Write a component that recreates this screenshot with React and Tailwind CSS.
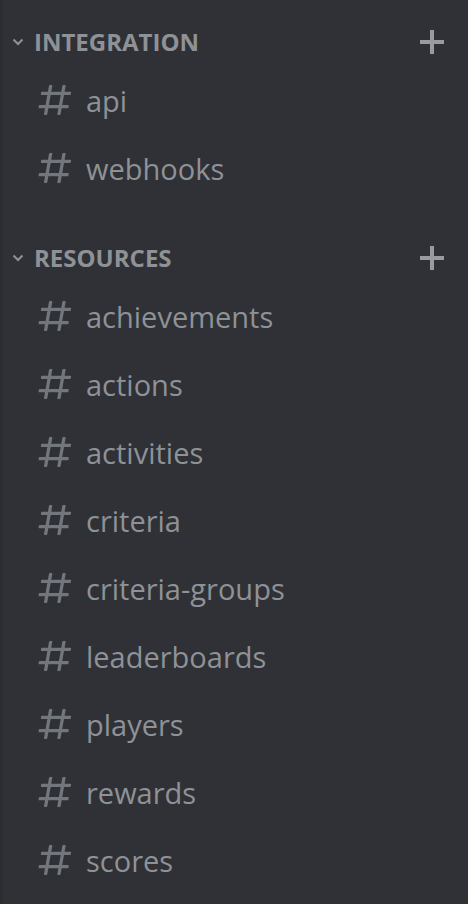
import React from "react";

const integration = ["api", "webhooks"];
const resources = [
  "achievements",
  "actions",
  "activities",
  "criteria",
  "criteria-groups",
  "leaderboards",
  "players",
  "rewards",
  "scores",
];

// Discord-style text channel hash
const HashIcon = () => (
  <svg width="40" height="40" viewBox="0 0 24 24" className="shrink-0 text-[#72767d]">
    <path
      fill="currentColor"
      fillRule="evenodd"
      d="M5.88657 21C5.57547 21 5.3399 20.7189 5.39427 20.4126L6.00001 17H2.59511C2.28449 17 2.04905 16.7198 2.10259 16.4138L2.27759 15.4138C2.31946 15.1746 2.52722 15 2.77011 15H6.35001L7.41001 9H4.00511C3.69449 9 3.45905 8.71977 3.51259 8.41381L3.68759 7.41381C3.72946 7.17456 3.93722 7 4.18011 7H7.76001L8.39677 3.41262C8.43914 3.17391 8.64664 3 8.88907 3H9.87344C10.1845 3 10.4201 3.28107 10.3657 3.58738L9.76001 7H15.76L16.3968 3.41262C16.4391 3.17391 16.6466 3 16.8891 3H17.8734C18.1845 3 18.4201 3.28107 18.3657 3.58738L17.76 7H21.1649C21.4755 7 21.711 7.28023 21.6574 7.58619L21.4824 8.58619C21.4406 8.82544 21.2328 9 20.9899 9H17.41L16.35 15H19.7549C20.0655 15 20.301 15.2802 20.2474 15.5862L20.0724 16.5862C20.0306 16.8254 19.8228 17 19.5799 17H16L15.3632 20.5874C15.3209 20.8261 15.1134 21 14.8709 21H13.8866C13.5755 21 13.3399 20.7189 13.3943 20.4126L14 17H8.00001L7.36325 20.5874C7.32088 20.8261 7.11337 21 6.87094 21H5.88657ZM9.41045 9L8.35045 15H14.3504L15.4104 9H9.41045Z"
    />
  </svg>
);

const Chevron = () => (
  <svg width="12" height="8" viewBox="0 0 12 8" className="shrink-0">
    <path d="M1.5 1.5 L6 6 L10.5 1.5" fill="none" stroke="#8e9297" strokeWidth="2" />
  </svg>
);

const Plus = () => (
  <svg width="24" height="24" viewBox="0 0 24 24" className="shrink-0">
    <rect x="10" y="0" width="4" height="24" fill="#989ba0" />
    <rect x="0" y="10" width="24" height="4" fill="#989ba0" />
  </svg>
);

const Category = ({ name, channels, first }) => (
  <div className={first ? "pt-[18px]" : "pt-8"}>
    <div className="flex items-center h-12 pl-3 pr-6">
      <Chevron />
      <span className="ml-[10px] flex-1 text-[24px] font-bold uppercase tracking-normal text-[#8e9297]">
        {name}
      </span>
      <Plus />
    </div>
    {channels.map((c) => (
      <div key={c} className="flex items-center h-[68px] pl-[35px]">
        <HashIcon />
        <span className="ml-[11px] text-[29px] font-medium text-[#8e9297] leading-none">{c}</span>
      </div>
    ))}
  </div>
);

export default function App() {
  return (
    <div
      className="min-h-screen w-full bg-[#2f3136] border-l-[3px] border-[#2a2c30]"
      style={{ fontFamily: '"Open Sans", "Liberation Sans", sans-serif' }}
    >
      <div className="-ml-[3px]">
        <Category name="Integration" channels={integration} first />
        <Category name="Resources" channels={resources} />
      </div>
    </div>
  );
}
